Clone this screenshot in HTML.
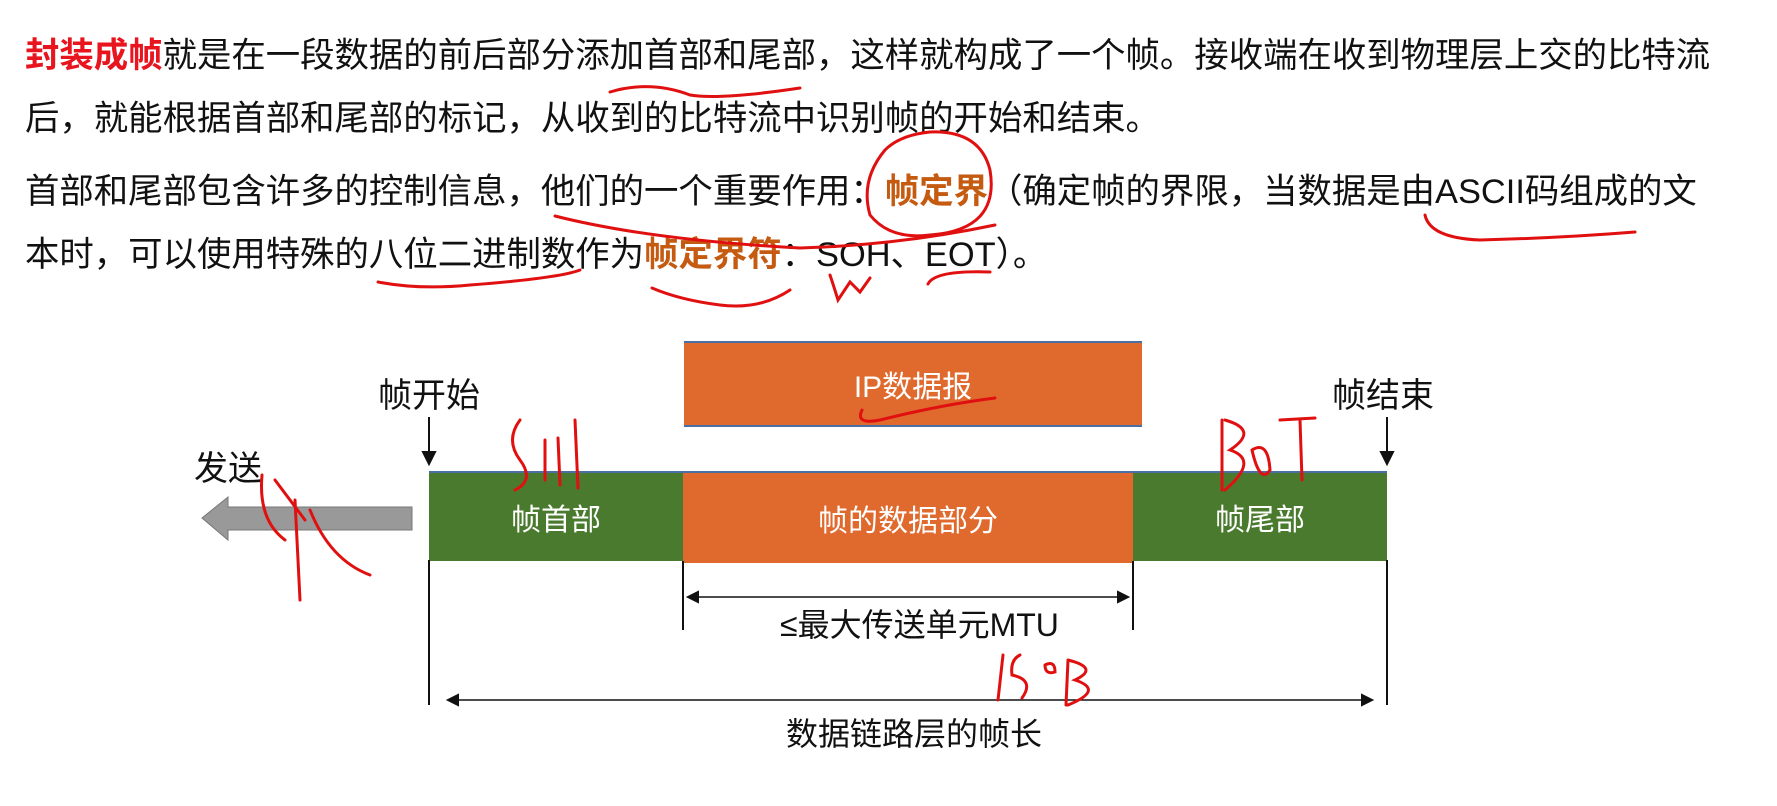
<!DOCTYPE html>
<html><head><meta charset="utf-8"><style>
body{margin:0;width:1777px;height:806px;background:#fff;overflow:hidden;position:relative;font-family:"Liberation Sans","Noto Sans CJK SC",sans-serif;}
.l{position:absolute;left:25px;font-size:34.4px;color:#111;white-space:nowrap;line-height:40px}
.r{color:#e8141e;font-weight:bold}.o{color:#c55a11;font-weight:bold}
.t{position:absolute;font-size:31px;color:#111;white-space:nowrap;line-height:36px}
.box{position:absolute;color:#fff;font-size:30px;display:flex;align-items:center;justify-content:center}
</style></head><body>
<div class="l" style="top:36px"><span class="r">封装成帧</span>就是在一段数据的前后部分添加首部和尾部，这样就构成了一个帧。接收端在收到物理层上交的比特流</div>
<div class="l" style="top:99px">后，就能根据首部和尾部的标记，从收到的比特流中识别帧的开始和结束。</div>
<div class="l" style="top:172px">首部和尾部包含许多的控制信息，他们的一个重要作用：<span class="o">帧定界</span>（确定帧的界限，当数据是由ASCII码组成的文</div>
<div class="l" style="top:235px">本时，可以使用特殊的八位二进制数作为<span class="o">帧定界符</span>：SOH、EOT）。</div>

<div class="box" style="left:684px;top:341px;width:458px;height:86px;background:#e06a2e;border-top:2px solid #4a6fa5;border-bottom:2px solid #4a6fa5;box-sizing:border-box">IP数据报</div>
<div class="box" style="left:429px;top:471px;width:254px;height:88px;background:#4a7a2e;border-top:2px solid #4a6fa5">帧首部</div>
<div class="box" style="left:683px;top:471px;width:450px;height:90px;background:#e06a2e;border-top:2px solid #4a6fa5">帧的数据部分</div>
<div class="box" style="left:1133px;top:471px;width:254px;height:88px;background:#4a7a2e;border-top:2px solid #4a6fa5">帧尾部</div>

<div class="t" style="left:378px;top:378px;font-size:34px">帧开始</div>
<div class="t" style="left:1332px;top:378px;font-size:34px">帧结束</div>
<div class="t" style="left:194px;top:451px;font-size:34px">发送</div>
<div class="t" style="left:780px;top:607px;font-size:32px">≤最大传送单元MTU</div>
<div class="t" style="left:786px;top:716px;font-size:32px">数据链路层的帧长</div>

<svg width="1777" height="806" style="position:absolute;left:0;top:0">
<g stroke="#111" stroke-width="2" fill="#111">
<line x1="429" y1="417" x2="429" y2="455"/><polygon points="423,452 435,452 429,464"/>
<line x1="1387" y1="417" x2="1387" y2="455"/><polygon points="1381,452 1393,452 1387,464"/>
<line x1="429" y1="560" x2="429" y2="705"/><line x1="1387" y1="560" x2="1387" y2="705"/>
<line x1="683" y1="561" x2="683" y2="630"/><line x1="1133" y1="561" x2="1133" y2="630"/>
<line x1="690" y1="597" x2="1126" y2="597" stroke-width="1.5"/>
<polygon points="688,597 698,592 698,602"/><polygon points="1128,597 1118,592 1118,602"/>
<line x1="450" y1="700" x2="1370" y2="700" stroke-width="1.5"/>
<polygon points="448,700 458,695 458,705"/><polygon points="1372,700 1362,695 1362,705"/>
</g>
<polygon points="202,518 228,497 228,507 412,507 412,530 228,530 228,540" fill="#999" stroke="#777"/>
<g stroke="#e01010" stroke-width="3" fill="none" stroke-linecap="round">
<path d="M610 92 Q650 80 690 95 Q720 100 800 88"/>
<path d="M885 150 Q860 180 870 215 Q890 240 930 235 Q1000 230 990 170 Q980 130 930 132 Q900 135 885 150"/>
<path d="M555 216 Q650 240 800 248 Q900 245 995 225"/>
<path d="M1425 215 Q1430 238 1480 240 Q1560 238 1635 232"/>
<path d="M378 282 Q420 290 470 285 Q560 278 580 270"/>
<path d="M652 288 Q680 300 720 305 Q760 310 790 290"/>
<path d="M830 275 Q835 290 838 300 L850 282 L860 292 L870 278"/>
<path d="M928 284 Q935 270 990 272"/>
<path d="M862 410 Q855 425 880 420 Q940 405 995 398"/>
<path d="M520 420 Q505 440 520 460 Q535 480 515 490 M545 440 L545 480 M558 438 L560 485 M575 420 L578 488"/>
<path d="M262 475 Q258 520 285 540 M275 480 Q290 500 305 520 M295 500 L300 600 M310 510 Q330 560 370 575"/>
<path d="M1222 420 L1222 490 M1225 420 Q1260 430 1230 450 Q1260 460 1225 490 M1252 450 Q1268 440 1270 470 Q1260 485 1252 450 M1280 420 L1315 418 M1300 420 L1302 480"/>
<path d="M1003 655 L998 700 M1020 655 Q1010 660 1012 675 Q1035 680 1022 698 M1045 665 Q1055 660 1055 672 Q1045 675 1045 665 M1068 660 L1066 705 M1068 660 Q1100 668 1075 680 Q1105 690 1068 705"/>
</g>
</svg>
</body></html>
